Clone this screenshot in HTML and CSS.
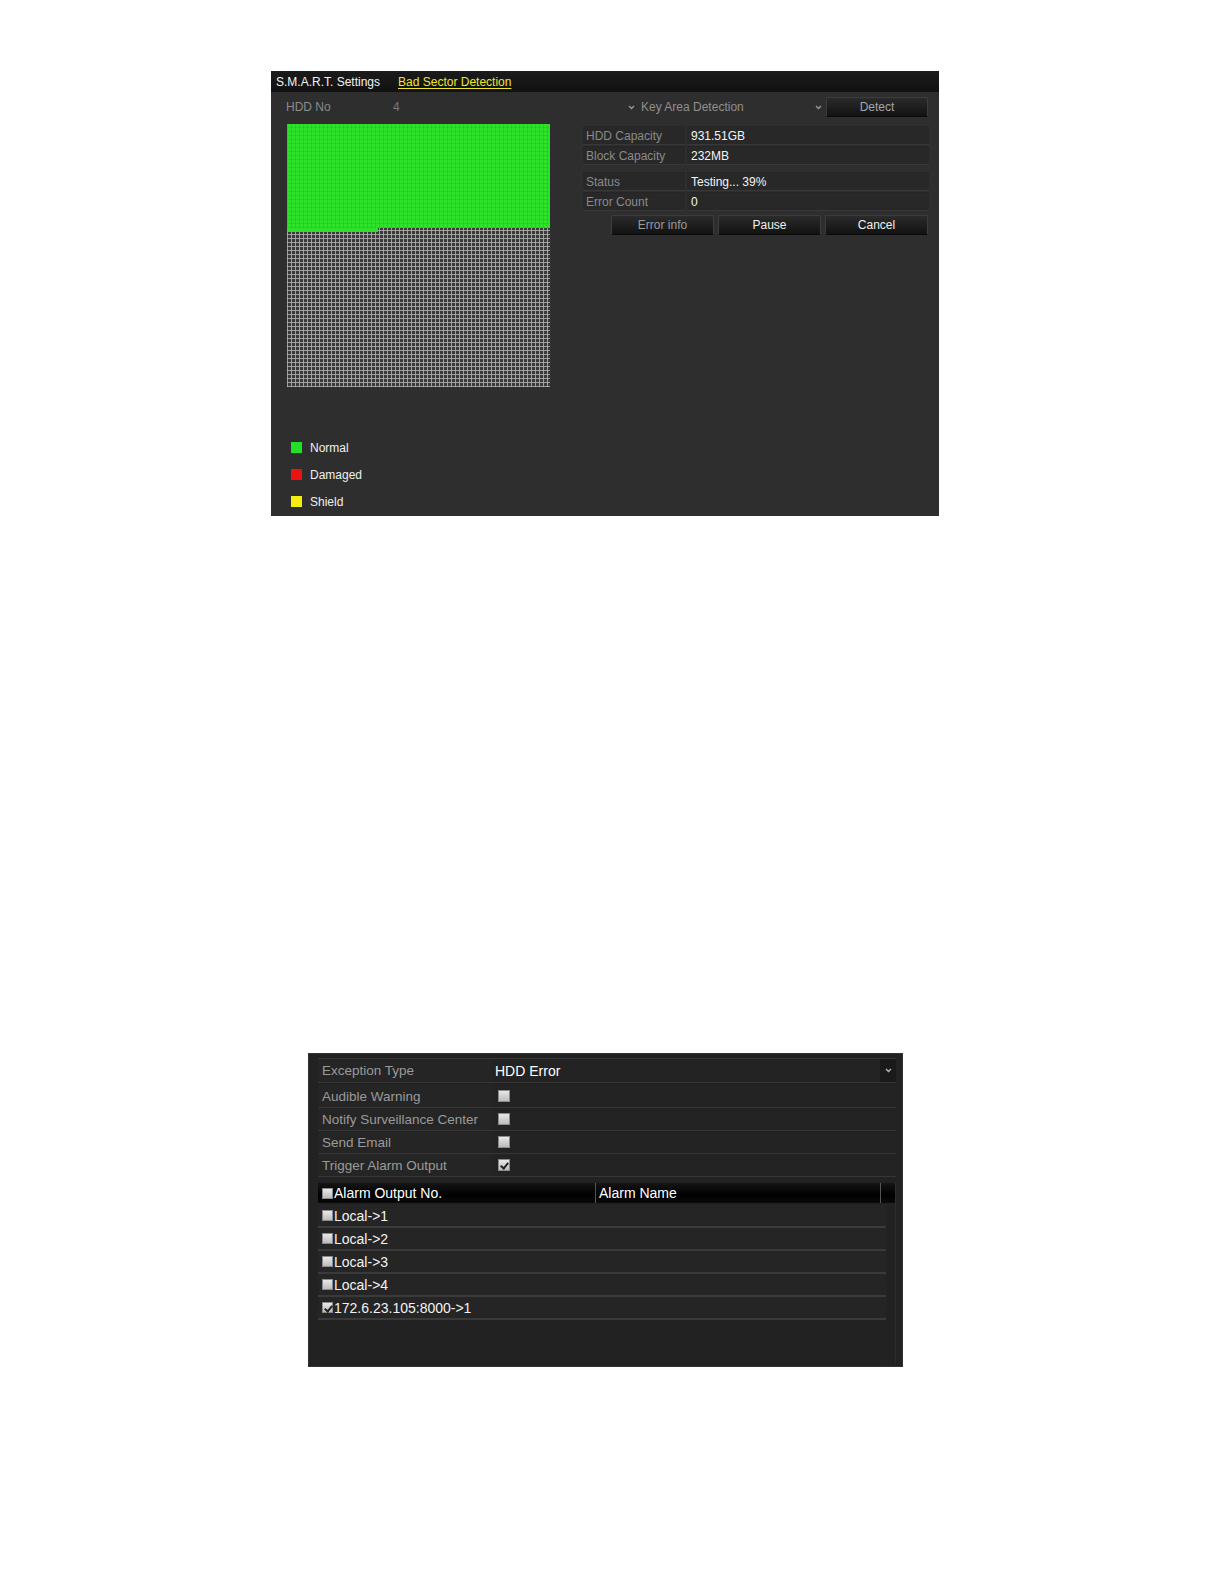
FILE: index.html
```html
<!DOCTYPE html>
<html>
<head>
<meta charset="utf-8">
<title>HDD Detection</title>
<link rel="stylesheet" href="styles.css">
</head>
<body>
<div class="panel smart">
  <div class="tabs">
    <span class="tab">S.M.A.R.T. Settings</span>
    <span class="tab active">Bad Sector Detection</span>
  </div>
  <div class="toprow">
    <span class="lbl-hdd">HDD No</span>
    <span class="val-hdd">4</span>
    <span class="select"><svg class="chev" width="7" height="5" viewBox="0 0 7 5"><path d="M1 1 L3.5 3.5 L6 1" fill="none" stroke="#9a9a9a" stroke-width="1.3"/></svg>Key Area Detection</span>
    <svg class="chev chev-end" width="7" height="5" viewBox="0 0 7 5"><path d="M1 1 L3.5 3.5 L6 1" fill="none" stroke="#9a9a9a" stroke-width="1.3"/></svg>
    <span class="btn btn-detect">Detect</span>
  </div>
  <div class="body">
    <div class="leftcol">
      <div class="blocks">
        <div class="done"></div>
        <div class="partial"></div>
      </div>
      <ul class="legend">
        <li><i class="sw sw-green"></i>Normal</li>
        <li><i class="sw sw-red"></i>Damaged</li>
        <li><i class="sw sw-yellow"></i>Shield</li>
      </ul>
    </div>
    <div class="rightcol">
      <div class="info">
        <div class="irow"><span class="ilbl">HDD Capacity</span><span class="ival">931.51GB</span></div>
        <div class="irow"><span class="ilbl">Block Capacity</span><span class="ival">232MB</span></div>
      </div>
      <div class="info info-2">
        <div class="irow"><span class="ilbl">Status</span><span class="ival">Testing... 39%</span></div>
        <div class="irow"><span class="ilbl">Error Count</span><span class="ival">0</span></div>
      </div>
      <div class="actions">
        <span class="btn btn-dim">Error info</span>
        <span class="btn">Pause</span>
        <span class="btn">Cancel</span>
      </div>
    </div>
  </div>
</div>

<div class="panel exc">
  <div class="erow erow-head">
    <span class="elbl">Exception Type</span>
    <span class="eval eval-text">HDD Error</span>
    <span class="dd"><svg width="7" height="5" viewBox="0 0 7 5"><path d="M1 1 L3.5 3.5 L6 1" fill="none" stroke="#bbb" stroke-width="1.3"/></svg></span>
  </div>
  <div class="erow"><span class="elbl">Audible Warning</span><span class="eval"><i class="cb"></i></span></div>
  <div class="erow"><span class="elbl">Notify Surveillance Center</span><span class="eval"><i class="cb"></i></span></div>
  <div class="erow"><span class="elbl">Send Email</span><span class="eval"><i class="cb"></i></span></div>
  <div class="erow"><span class="elbl">Trigger Alarm Output</span><span class="eval"><i class="cb cb-on"></i></span></div>
  <div class="table">
    <div class="thead">
      <span class="th th-1"><i class="cb cb-sm"></i>Alarm Output No.</span>
      <span class="th th-2">Alarm Name</span>
      <span class="th th-3"></span>
    </div>
    <div class="trow"><i class="cb cb-sm"></i>Local-&gt;1</div>
    <div class="trow"><i class="cb cb-sm"></i>Local-&gt;2</div>
    <div class="trow"><i class="cb cb-sm"></i>Local-&gt;3</div>
    <div class="trow"><i class="cb cb-sm"></i>Local-&gt;4</div>
    <div class="trow"><i class="cb cb-sm cb-on"></i>172.6.23.105:8000-&gt;1</div>
  </div>
</div>
</body>
</html>
```

FILE: styles.css
```css
* { box-sizing: border-box; }
html, body { margin: 0; padding: 0; background: #ffffff; }
body { font-family: "Liberation Sans", Arial, sans-serif; }

.panel { position: relative; }

/* ---------- top panel ---------- */
.smart {
  margin: 71px 0 0 271px;
  width: 668px;
  height: 445px;
  background: #2e2e2e;
  font-size: 12px;
}
.tabs {
  height: 21px;
  background: linear-gradient(#1b1b1b, #111111);
  display: flex;
  align-items: center;
  padding-left: 5px;
  gap: 18px;
}
.tab { color: #f2f2f2; }
.tab.active { color: #f0e62a; text-decoration: underline; text-underline-offset: 2px; }

.toprow {
  display: flex;
  align-items: center;
  height: 20px;
  margin-top: 5px;
  padding-left: 15px;
}
.lbl-hdd { width: 107px; color: #8c8c8c; }
.val-hdd { width: 235px; color: #7a7a7a; }
.select { width: 187px; color: #8f8f8f; display: flex; align-items: center; }
.select .chev { margin-right: 6px; }
.chev-end { margin-right: 4px; }

.btn {
  display: flex;
  align-items: center;
  justify-content: center;
  height: 20px;
  width: 103px;
  background: linear-gradient(#2b2b2b, #121212);
  border: 1px solid #3c3c3c;
  border-bottom-color: #0a0a0a;
  color: #f0f0f0;
}
.btn-detect { width: 102px; color: #a6a6a6; }
.btn-dim { color: #9a9a9a; }

.body { display: flex; margin-top: 7px; }
.leftcol { margin-left: 16px; width: 263px; }
.blocks {
  width: 263px;
  height: 263px;
  background:
    repeating-linear-gradient(90deg, rgba(190,190,190,0.75) 0 1px, transparent 1px 4px),
    repeating-linear-gradient(0deg, rgba(190,190,190,0.75) 0 1px, transparent 1px 4px),
    #3a3a3a;
}
.done {
  height: 104px;
  background:
    repeating-linear-gradient(90deg, rgba(20,150,20,0.25) 0 1px, transparent 1px 4px),
    repeating-linear-gradient(0deg, rgba(20,150,20,0.2) 0 1px, transparent 1px 4px),
    #2ee22c;
}
.partial { height: 4px; width: 91px; background: #2ee22c; }

.legend { list-style: none; margin: 55px 0 0 4px; padding: 0; }
.legend li {
  display: flex;
  align-items: center;
  height: 11px;
  margin-bottom: 16px;
  color: #f0f0f0;
  font-size: 12px;
}
.sw { display: block; width: 11px; height: 11px; margin-right: 8px; }
.sw-green { background: #21e025; }
.sw-red { background: #ee1111; }
.sw-yellow { background: #f4ee10; }

.rightcol { margin-left: 33px; width: 346px; margin-top: 2px; }
.info { display: flex; flex-direction: column; gap: 1px; }
.info-2 { margin-top: 7px; }
.irow { display: flex; height: 19px; gap: 2px; }
.ilbl, .ival {
  display: flex;
  align-items: center;
  background: #282828;
  border-top: 1px solid #252525;
  border-bottom: 1px solid #383838;
  padding-left: 3px;
}
.ilbl { width: 102px; color: #8a8a8a; }
.ival { flex: 1; color: #f4f4f4; padding-left: 4px; }

.actions { display: flex; justify-content: flex-end; gap: 4px; margin-top: 4px; margin-right: 1px; }

/* ---------- bottom panel ---------- */
.exc {
  margin: 537px 0 0 308px;
  width: 595px;
  height: 314px;
  background: #222222;
  border: 1px solid #333;
  padding: 4px 6px 0 9px;
  font-size: 13.5px;
}
.erow {
  display: flex;
  height: 23px;
  border-bottom: 1px solid #363636;
}
.erow-head { height: 25px; border-top: 1px solid #363636; margin-bottom: 2px; }
.elbl {
  width: 174px;
  display: flex;
  align-items: center;
  padding-left: 4px;
  color: #9a9a9a;
  background: #252525;
}
.eval {
  flex: 1;
  display: flex;
  align-items: center;
  padding-left: 6px;
  background: #232323;
}
.eval-text { color: #ffffff; padding-left: 3px; font-size: 14px; }
.dd {
  width: 16px;
  display: flex;
  align-items: center;
  justify-content: center;
  background: #1a1a1a;
}

.cb {
  display: inline-block;
  width: 12px;
  height: 12px;
  background: linear-gradient(#e8e8e8, #bcbcbc);
  border: 1px solid #8a8a8a;
  position: relative;
  flex: none;
}
.cb-sm { width: 11px; height: 11px; margin-right: 1px; }
.cb-on::after {
  content: "";
  position: absolute;
  left: 3px;
  top: 1px;
  width: 3px;
  height: 6px;
  border: solid #222;
  border-width: 0 2px 2px 0;
  transform: rotate(40deg);
}

.table {
  margin-top: 6px;
  height: 180px;
  width: 578px;
  border-right: 1px solid #2e2e2e;
}
.thead {
  display: flex;
  height: 20px;
  background: linear-gradient(#151515, #000000 60%, #0a0a0a);
  margin-bottom: 2px;
}
.th {
  display: flex;
  align-items: center;
  color: #ffffff;
  font-size: 14px;
}
.th-1 { width: 278px; padding-left: 4px; border-right: 1px solid #555; }
.th-2 { width: 285px; padding-left: 3px; border-right: 1px solid #555; }
.th-3 { flex: 1; }
.trow {
  display: flex;
  align-items: center;
  height: 23px;
  width: 568px;
  padding-left: 4px;
  color: #f2f2f2;
  font-size: 14px;
  border-bottom: 2px solid #3a3a3a;
  background: #252525;
}
```
